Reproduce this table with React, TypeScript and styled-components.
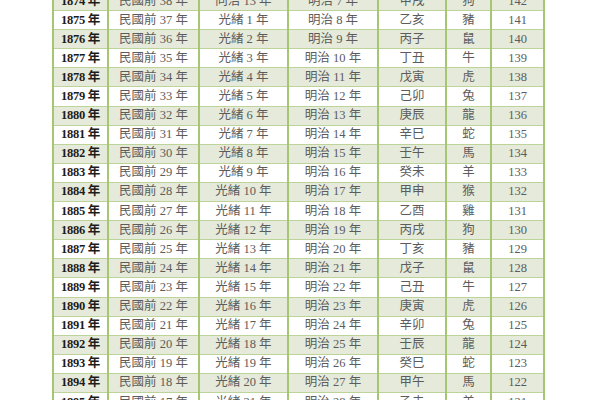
import React from "react";
import styled, { createGlobalStyle } from "styled-components";

const GlobalStyle = createGlobalStyle`
  html, body {
    margin: 0;
    padding: 0;
    background: #ffffff;
    overflow: hidden;
  }
`;

const STEMS = "甲乙丙丁戊己庚辛壬癸";
const BRANCHES = "子丑寅卯辰巳午未申酉戌亥";
const ZODIAC = ["鼠", "牛", "虎", "兔", "龍", "蛇", "馬", "羊", "猴", "雞", "狗", "豬"];

const years = Array.from({ length: 22 }, (_, i) => 1874 + i);

const cycle = (year: number) => {
  const s = (year - 4) % 10;
  const b = (year - 4) % 12;
  return { ganzhi: STEMS[s] + BRANCHES[b], animal: ZODIAC[b] };
};

const Page = styled.div`
  padding-left: 52px;
  margin-top: -9px;
`;

const Table = styled.table`
  border-collapse: collapse;
  table-layout: fixed;
  width: 491px;
  font-family: "Liberation Serif", "Noto Sans CJK TC", serif;
  font-size: 12.5px;
`;

const Row = styled.tr<{ $shaded: boolean }>`
  height: 19.1px;
  background: ${(p) => (p.$shaded ? "#e5eada" : "#ffffff")};
`;

const Cell = styled.td<{ $head?: boolean }>`
  padding: 0;
  text-align: center;
  line-height: 17px;
  white-space: nowrap;
  border-top: 1px solid #bcd49a;
  border-bottom: 1px solid #bcd49a;
  border-left: 2px solid #a6c673;
  border-right: 2px solid #a6c673;
  color: ${(p) => (p.$head ? "#1c1c1c" : "#5c5c5c")};
  font-weight: ${(p) => (p.$head ? 700 : 400)};
  letter-spacing: ${(p) => (p.$head ? "-0.3px" : "0")};
`;

const widths = [55, 91, 89, 90, 68, 45, 53];

export default function App() {
  return (
    <>
      <GlobalStyle />
      <Page>
        <Table>
          <colgroup>
            {widths.map((w, i) => (
              <col key={i} style={{ width: w }} />
            ))}
          </colgroup>
          <tbody>
            {years.map((y) => {
              const { ganzhi, animal } = cycle(y);
              const era = y === 1874 ? "同治 13 年" : `光緒 ${y - 1874} 年`;
              return (
                <Row key={y} $shaded={y % 2 === 0}>
                  <Cell $head>{y} 年</Cell>
                  <Cell>民國前 {1912 - y} 年</Cell>
                  <Cell>{era}</Cell>
                  <Cell>明治 {y - 1867} 年</Cell>
                  <Cell>{ganzhi}</Cell>
                  <Cell>{animal}</Cell>
                  <Cell>{2016 - y}</Cell>
                </Row>
              );
            })}
          </tbody>
        </Table>
      </Page>
    </>
  );
}
